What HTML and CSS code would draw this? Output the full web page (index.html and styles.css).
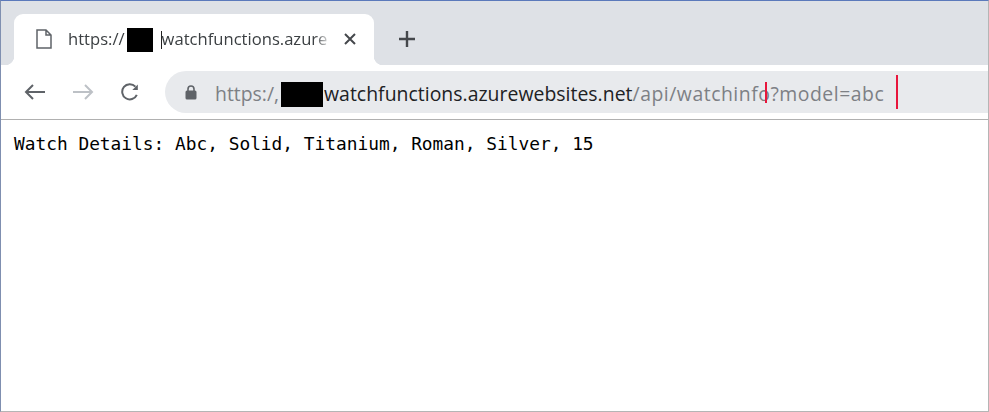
FILE: index.html
```html
<!DOCTYPE html>
<html lang="en">
<head>
  <meta charset="UTF-8">
  <meta name="viewport" content="width=device-width, initial-scale=1.0">
  <title>Watch Details</title>
  <link rel="stylesheet" href="styles.css">
</head>
<body>
  <div class="window">
    <!-- Tab strip -->
    <div class="tabstrip">
      <div class="tab">
        <svg class="tab-icon" width="16" height="20" viewBox="0 0 16 20">
          <path d="M1 1h9l5 5v13H1z M10 1v5h5" fill="#fff" stroke="#5f6368" stroke-width="1.5"/>
        </svg>
        <span class="tab-title">https://<span class="redact-tab"></span><span class="caret"></span>watchfunctions.azure</span>
        <svg class="tab-close" width="14" height="14" viewBox="0 0 14 14">
          <path d="M2 2l10 10M12 2L2 12" stroke="#45484c" stroke-width="2"/>
        </svg>
      </div>
      <svg class="new-tab" width="18" height="18" viewBox="0 0 18 18">
        <path d="M9 1v16M1 9h16" stroke="#45484c" stroke-width="2.4"/>
      </svg>
    </div>

    <!-- Toolbar -->
    <div class="toolbar">
      <svg class="nav-icon" width="24" height="20" viewBox="0 0 24 20">
        <path d="M23 10H4M11 3l-7 7 7 7" fill="none" stroke="#5f6368" stroke-width="2"/>
      </svg>
      <svg class="nav-icon" width="24" height="20" viewBox="0 0 24 20">
        <path d="M3 10h19M15 3l7 7-7 7" fill="none" stroke="#bdc1c6" stroke-width="2"/>
      </svg>
      <svg class="nav-icon nav-reload" width="18" height="18" viewBox="0 0 18 18">
        <path d="M15.800 11.800A7.600 7.600 0 1 1 14.400 3.600" fill="none" stroke="#5f6368" stroke-width="2"/>
        <path d="M16.800 1.500v5.500h-5.500z" fill="#5f6368"/>
      </svg>
      <div class="omnibox">
        <svg class="lock" width="12" height="15" viewBox="0 0 12 15">
          <path d="M3 6V4a3 3 0 0 1 6 0v2" fill="none" stroke="#5f6368" stroke-width="1.6"/>
          <rect x="0.500" y="5.500" width="11" height="9" rx="1.500" fill="#5f6368"/>
        </svg>
        <span class="url"><span class="url-dim">https:/,</span><span class="redact-url"></span><span class="url-host">watchfunctions.azurewebsites.net</span><span class="url-dim url-tail">/api/watchinfo?model=abc</span></span>
        <span class="mark mark-path"></span>
        <span class="mark mark-query"></span>
      </div>
    </div>

    <div class="content">Watch Details: Abc, Solid, Titanium, Roman, Silver, 15</div>
  </div>
</body>
</html>
```

FILE: styles.css
```css
html, body {
  margin: 0;
  padding: 0;
}
body {
  background-color: #fff;
  font-family: "Open Sans", "Noto Sans", sans-serif;
}
.window {
  height: 412px;
  box-sizing: border-box;
  overflow: hidden;
  border-top: 1px solid #5b79bb;
  border-left: 1px solid #7f8fb0;
  border-right: 1px solid #b5b5b5;
  border-bottom: 1px solid #b5b5b5;
}
.tabstrip {
  height: 64px;
  background-color: #dee1e6;
  display: flex;
  align-items: flex-end;
  padding-left: 13px;
}
.tab {
  width: 360px;
  height: 51px;
  box-sizing: border-box;
  background-color: #fff;
  border-radius: 9px 9px 0 0;
  display: flex;
  align-items: center;
  padding: 0 17px 1px 22px;
  position: relative;
}
.tab::before,
.tab::after {
  content: "";
  position: absolute;
  bottom: 0;
  width: 9px;
  height: 9px;
}
.tab::before {
  left: -9px;
  background: radial-gradient(circle at 0 0, #dee1e6 9px, #fff 9.5px);
}
.tab::after {
  right: -9px;
  background: radial-gradient(circle at 100% 0, #dee1e6 9px, #fff 9.5px);
}
.tab-icon {
  flex: none;
}
.tab-title {
  flex: 1;
  margin-left: 16px;
  margin-right: 12px;
  font-size: 16.600px;
  color: #3c4043;
  white-space: nowrap;
  overflow: hidden;
  -webkit-mask-image: linear-gradient(to left, transparent 0, #000 16px);
  mask-image: linear-gradient(to left, transparent 0, #000 16px);
}
.redact-tab {
  display: inline-block;
  width: 26px;
  height: 24px;
  margin-left: 2px;
  background-color: #000;
  vertical-align: -7px;
}
.caret {
  display: inline-block;
  width: 1px;
  height: 18px;
  margin-left: 8px;
  background-color: #222;
  vertical-align: -4px;
}
.tab-close {
  flex: none;
}
.new-tab {
  margin: 0 0 17px 24px;
}
.toolbar {
  height: 55px;
  box-sizing: border-box;
  border-bottom: 1px solid #b0b0b0;
  display: flex;
  align-items: center;
  padding-left: 21px;
}
.nav-icon {
  flex: none;
  margin-right: 24px;
}
.nav-reload {
  margin-left: 3px;
}
.omnibox {
  flex: 1;
  height: 42px;
  margin-left: 2px;
  margin-right: -1px;
  background-color: #e8eaed;
  border-radius: 21px 0 0 21px;
  display: flex;
  align-items: center;
  padding-left: 20px;
  position: relative;
}
.lock {
  flex: none;
}
.url {
  margin-left: 18px;
  margin-top: 2px;
  font-size: 19.400px;
  white-space: nowrap;
}
.url-dim {
  color: #7d8085;
}
.url-host {
  color: #202124;
  letter-spacing: 0.030px;
}
.url-tail {
  letter-spacing: 0.520px;
}
.redact-url {
  display: inline-block;
  width: 42px;
  height: 25px;
  margin-left: 2px;
  margin-right: 1px;
  background-color: #000;
  vertical-align: -6px;
}
.mark {
  position: absolute;
  width: 2px;
  background-color: #e8163c;
}
.mark-path {
  left: 600px;
  top: 11px;
  height: 21px;
}
.mark-query {
  left: 731px;
  top: 4px;
  height: 34px;
}
.content {
  padding: 14px 13px;
  font-family: "DejaVu Sans Mono", monospace;
  font-size: 17.830px;
  line-height: 20px;
  color: #000;
  white-space: pre;
}
```
